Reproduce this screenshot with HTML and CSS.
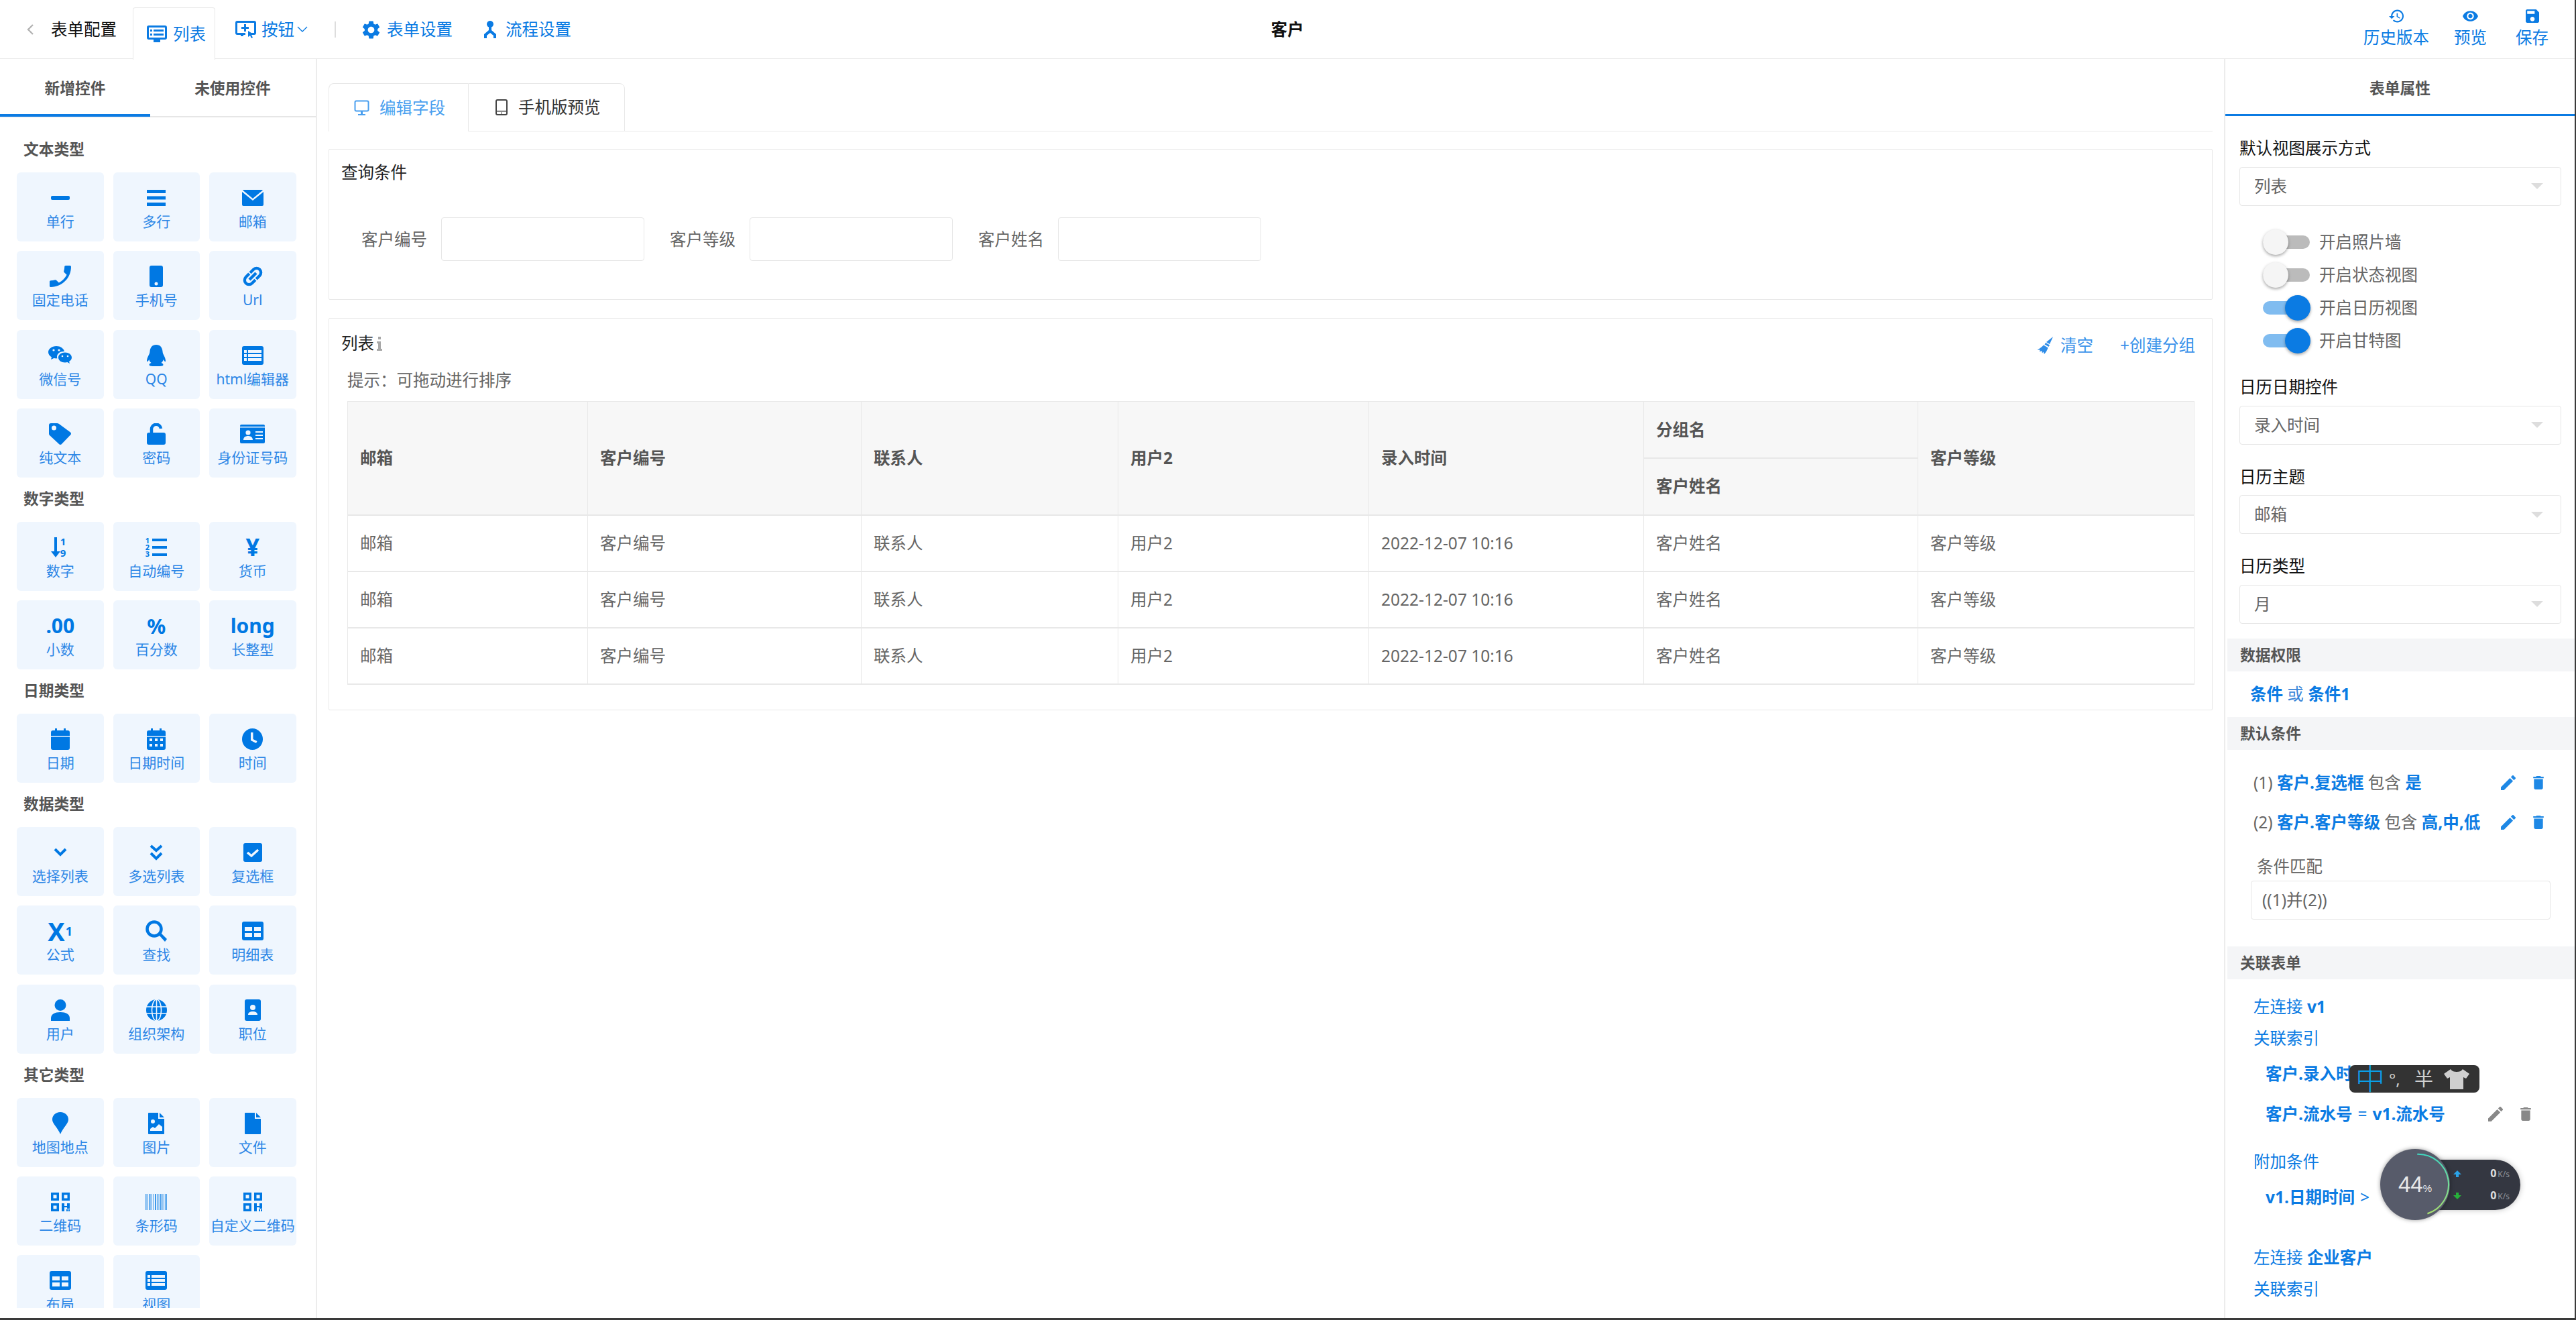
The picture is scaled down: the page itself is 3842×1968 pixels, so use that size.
FILE: index.html
```html
<!DOCTYPE html>
<html lang="zh-CN">
<head>
  <meta charset="utf-8">
  <title>表单配置</title>
  <link rel="stylesheet" href="styles.css">
</head>
<body>
<div class="window">

  <!-- top bar -->
  <header class="topbar">
    <div class="top-left">
      <svg class="back" width="10" height="16" viewBox="0 0 10 16"><path d="M9 1L2 8l7 7" fill="none" stroke="#b5b5b5" stroke-width="2.4"/></svg>
      <span class="top-title">表单配置</span>
      <a class="top-tab">
        <svg width="30" height="25" viewBox="0 0 30 25"><path d="M3 0h24a3 3 0 0 1 3 3v15a3 3 0 0 1-3 3h-7v4H10v-4H3a3 3 0 0 1-3-3V3a3 3 0 0 1 3-3zm0 3v15h24V3z" fill="#0b7be3" fill-rule="evenodd"/><path d="M5 6h3v3H5zM10 6h15v3H10zM5 12h3v3H5zM10 12h15v3H10z" fill="#0b7be3"/></svg>
        <span>列表</span>
      </a>
      <a class="top-link top-btn">
        <svg width="31" height="26" viewBox="0 0 31 26"><path d="M3 0h25a3 3 0 0 1 3 3v15a3 3 0 0 1-3 3H23v-3h5V3H3v15h12v3h-3v2H8v-2H3a3 3 0 0 1-3-3V3a3 3 0 0 1 3-3z" fill="#0b7be3"/><path d="M13 5h3v4h4v3h-4v4h-3v-4H9V9h4zM19 15l8 5-3 1 2 4-2 1-2-4-3 2z" fill="#0b7be3"/></svg>
        <span>按钮</span>
        <svg class="caret" width="16" height="10" viewBox="0 0 16 10"><path d="M1 1l7 7 7-7" fill="none" stroke="#0b7be3" stroke-width="1.4"/></svg>
      </a>
      <i class="top-sep"></i>
      <a class="top-link top-set">
        <svg width="27" height="27" viewBox="2 2 20 20"><path fill="#0b7be3" d="M19.14 12.94c.04-.3.06-.61.06-.94 0-.32-.02-.64-.07-.94l2.03-1.58c.18-.14.23-.41.12-.61l-1.92-3.32c-.12-.22-.37-.29-.59-.22l-2.39.96c-.5-.38-1.03-.7-1.62-.94l-.36-2.54c-.04-.24-.24-.41-.48-.41h-3.84c-.24 0-.43.17-.47.41l-.36 2.54c-.59.24-1.13.57-1.62.94l-2.39-.96c-.22-.08-.47 0-.59.22L2.74 8.87c-.12.21-.08.47.12.61l2.03 1.58c-.05.3-.09.63-.09.94s.02.64.07.94l-2.03 1.58c-.18.14-.23.41-.12.61l1.92 3.32c.12.22.37.29.59.22l2.39-.96c.5.38 1.03.7 1.62.94l.36 2.54c.05.24.24.41.48.41h3.84c.24 0 .44-.17.47-.41l.36-2.54c.59-.24 1.13-.56 1.62-.94l2.39.96c.22.08.47 0 .59-.22l1.92-3.32c.12-.22.07-.47-.12-.61l-2.01-1.58zM12 15.6c-1.98 0-3.6-1.62-3.6-3.6s1.62-3.6 3.6-3.6 3.6 1.62 3.6 3.6-1.62 3.6-3.6 3.6z"/></svg>
        <span>表单设置</span>
      </a>
      <a class="top-link top-flow">
        <svg width="26" height="26" viewBox="0 0 26 26"><circle cx="13" cy="5" r="5" fill="#0b7be3"/><path d="M11 8h4v6l7 6v6h-4v-4l-5-4-5 4v4H4v-6l7-6z" fill="#0b7be3"/></svg>
        <span>流程设置</span>
      </a>
    </div>
    <div class="top-center">客户</div>
    <div class="top-right">
      <a class="top-act top-act-hist">
        <svg width="22" height="20" viewBox="1 3 21 18"><path fill="#0b7be3" d="M13 3c-4.97 0-9 4.03-9 9H1l3.89 3.89.07.14L9 12H6c0-3.87 3.13-7 7-7s7 3.13 7 7-3.13 7-7 7c-1.93 0-3.68-.79-4.94-2.06l-1.42 1.42C8.27 19.99 10.51 21 13 21c4.97 0 9-4.03 9-9s-4.03-9-9-9zm-1 5v5l4.28 2.54.72-1.21-3.5-2.08V8H12z"/></svg>
        <span>历史版本</span>
      </a>
      <a class="top-act top-act-view">
        <svg width="23" height="20" viewBox="1 4 22 16"><path fill="#0b7be3" d="M12 4.5C7 4.5 2.73 7.61 1 12c1.73 4.39 6 7.500 11 7.500s9.270-3.110 11-7.500c-1.730-4.390-6-7.500-11-7.500zM12 17c-2.760 0-5-2.240-5-5s2.240-5 5-5 5 2.240 5 5-2.240 5-5 5zm0-8c-1.660 0-3 1.340-3 3s1.340 3 3 3 3-1.340 3-3-1.340-3-3-3z"/></svg>
        <span>预览</span>
      </a>
      <a class="top-act">
        <svg width="20" height="20" viewBox="3 3 18 18"><path fill="#0b7be3" d="M17 3H5c-1.110 0-2 .9-2 2v14c0 1.100.89 2 2 2h14c1.100 0 2-.9 2-2V7l-4-4zm-5 16c-1.660 0-3-1.340-3-3s1.340-3 3-3 3 1.340 3 3-1.340 3-3 3zm3-10H5V5h10v4z"/></svg>
        <span>保存</span>
      </a>
    </div>
  </header>

  <div class="main">

    <!-- left: controls -->
    <aside class="left">
      <div class="left-tabs">
        <div class="left-tab on">新增控件</div>
        <div class="left-tab">未使用控件</div>
      </div>
      <div class="ctl-scroll">
        <h4 class="ctl-title">文本类型</h4>
        <div class="ctl-grid">
          <div class="ctl"><span class="ctl-ic"><svg width="28" height="6" viewBox="0 0 28 6"><rect width="28" height="6" rx="2"/></svg></span><span>单行</span></div>
          <div class="ctl"><span class="ctl-ic"><svg width="28" height="24" viewBox="0 0 28 24"><path d="M0 0h28v5H0zM0 9.500h28v5H0zM0 19h28v5H0z"/></svg></span><span>多行</span></div>
          <div class="ctl"><span class="ctl-ic"><svg width="32" height="24" viewBox="0 0 32 24"><path d="M2 0h28a2 2 0 0 1 1 .4L16 13 1 .4A2 2 0 0 1 2 0zM0 3l16 13L32 3v19a2 2 0 0 1-2 2H2a2 2 0 0 1-2-2z"/></svg></span><span>邮箱</span></div>
          <div class="ctl"><span class="ctl-ic"><svg width="32" height="32" viewBox="3 3 18 18"><path transform="matrix(-1 0 0 1 24 0)" d="M6.620 10.790c1.440 2.830 3.760 5.140 6.590 6.590l2.200-2.200c.27-.27.67-.36 1.020-.24 1.120.37 2.330.57 3.570.57.55 0 1 .45 1 1V20c0 .55-.45 1-1 1-9.390 0-17-7.610-17-17 0-.55.45-1 1-1h3.500c.55 0 1 .45 1 1 0 1.250.2 2.450.57 3.570.11.35.03.74-.25 1.020l-2.200 2.200z"/></svg></span><span>固定电话</span></div>
          <div class="ctl"><span class="ctl-ic"><svg width="20" height="32" viewBox="0 0 20 32"><path fill-rule="evenodd" d="M3 0h14a3 3 0 0 1 3 3v26a3 3 0 0 1-3 3H3a3 3 0 0 1-3-3V3a3 3 0 0 1 3-3zm7 24.500a2.500 2.500 0 1 0 0 5 2.500 2.500 0 0 0 0-5z"/></svg></span><span>手机号</span></div>
          <div class="ctl"><span class="ctl-ic"><svg width="32" height="32" viewBox="2 2 20 20"><path transform="rotate(-45 12 12)" stroke="#0078e3" stroke-width=".8" d="M3.900 12c0-1.710 1.390-3.100 3.100-3.100h4V7H7c-2.760 0-5 2.240-5 5s2.240 5 5 5h4v-1.900H7c-1.710 0-3.100-1.390-3.100-3.100zM8 13h8v-2H8v2zm9-6h-4v1.900h4c1.710 0 3.100 1.390 3.100 3.100s-1.390 3.100-3.100 3.100h-4V17h4c2.760 0 5-2.240 5-5s-2.240-5-5-5z"/></svg></span><span>Url</span></div>
          <div class="ctl"><span class="ctl-ic"><svg width="35" height="28" viewBox="0 0 35 28"><path d="M12 0c6 0 11 3.500 12 8-6-.5-11 3-11 8 0 1 .2 1.600.4 2.300-1.800.2-3.200 0-5-.4L4 20l1-3.500C2 14.500 0 12 0 9c0-5 5.500-9 12-9z"/><path d="M35 17c0-4.500-4.500-7.500-10-7.500S15 12.500 15 17s4.500 7.500 10 7.500c1.300 0 2.500-.2 3.500-.5l3.500 2-1-3c2.500-1.500 4-3.500 4-6z"/><circle class="hole" cx="8" cy="6" r="1.600"/><circle class="hole" cx="16" cy="6" r="1.600"/><circle class="hole" cx="21" cy="15" r="1.300"/><circle class="hole" cx="29" cy="15" r="1.300"/></svg></span><span>微信号</span></div>
          <div class="ctl"><span class="ctl-ic"><svg width="28" height="32" viewBox="0 0 28 32"><path d="M14 0C8 0 5 4 4.500 10c-.2 2-.5 3-1.500 5-1.500 3-3 6-3 9 0 1 .5 1.500 1 1 .7-.4 2-2 2.500-3 .3 2 1.500 4 3 5-1.500.7-3 1.300-3 3 0 1 2 2 5 2h11c3 0 5-1 5-2 0-1.700-1.500-2.300-3-3 1.500-1 2.700-3 3-5 .5 1 1.800 2.600 2.500 3 .5.500 1 0 1-1 0-3-1.500-6-3-9-1-2-1.300-3-1.500-5C23 4 20 0 14 0z"/></svg></span><span>QQ</span></div>
          <div class="ctl"><span class="ctl-ic"><svg width="32" height="28"><use href="#i-list"/></svg></span><span>html编辑器</span></div>
          <div class="ctl"><span class="ctl-ic"><svg width="33" height="32" viewBox="0 0 33 32"><path fill-rule="evenodd" d="M3 0h9c1 0 2 .3 3 1l17 12.500a2.500 2.500 0 0 1 0 4L19 31a2.500 2.500 0 0 1-4 0L1 18c-.7-.8-1-1.500-1-3V3a3 3 0 0 1 3-3zm4.500 3.500a3.500 3.500 0 1 0 0 7 3.500 3.500 0 0 0 0-7z"/></svg></span><span>纯文本</span></div>
          <div class="ctl"><span class="ctl-ic"><svg width="28" height="32" viewBox="0 0 28 32"><rect y="14" width="28" height="18" rx="3"/><path d="M7 15V9.500a7 7 0 0 1 14-1.500" fill="none" stroke="#0078e3" stroke-width="4.500"/></svg></span><span>密码</span></div>
          <div class="ctl"><span class="ctl-ic"><svg width="37" height="28" viewBox="0 0 37 28"><rect width="37" height="28" rx="2"/><path class="hole" d="M0 3h37v1.500H0z"/><circle class="hole" cx="12" cy="12" r="3.600"/><path class="hole" d="M5 23c0-4 3-6 7-6s7 2 7 6zM23 10h11v2H23zM23 15h11v2H23zM23 20h11v2H23z"/></svg></span><span>身份证号码</span></div>
        </div>

        <h4 class="ctl-title">数字类型</h4>
        <div class="ctl-grid">
          <div class="ctl"><span class="ctl-ic"><svg width="28" height="30" viewBox="0 0 28 30"><path d="M5 0h4v21h5l-7 9-7-9h5z"/><text class="svg-num" x="18" y="12" text-anchor="middle">1</text><text class="svg-num" x="18" y="29" text-anchor="middle">9</text></svg></span><span>数字</span></div>
          <div class="ctl"><span class="ctl-ic"><svg width="32" height="30" viewBox="0 0 32 30"><text class="svg-num-sm" x="3" y="9" text-anchor="middle">1</text><text class="svg-num-sm" x="3" y="19" text-anchor="middle">2</text><text class="svg-num-sm" x="3" y="29" text-anchor="middle">3</text><path d="M10 2h22v4H10zM10 13h22v4H10zM10 24h22v4H10z"/></svg></span><span>自动编号</span></div>
          <div class="ctl"><span class="ctl-ic ctl-txt ctl-yen">¥</span><span>货币</span></div>
          <div class="ctl"><span class="ctl-ic ctl-txt">.00</span><span>小数</span></div>
          <div class="ctl"><span class="ctl-ic ctl-txt ctl-pct">%</span><span>百分数</span></div>
          <div class="ctl"><span class="ctl-ic ctl-txt">long</span><span>长整型</span></div>
        </div>

        <h4 class="ctl-title">日期类型</h4>
        <div class="ctl-grid">
          <div class="ctl"><span class="ctl-ic"><svg width="28" height="32" viewBox="0 0 28 32"><path d="M6 0h3v3h10V0h3v3h3a3 3 0 0 1 3 3v5H0V6a3 3 0 0 1 3-3h3zM0 12.500h28V29a3 3 0 0 1-3 3H3a3 3 0 0 1-3-3z"/></svg></span><span>日期</span></div>
          <div class="ctl"><span class="ctl-ic"><svg width="28" height="32" viewBox="0 0 28 32"><path d="M6 0h3v3h10V0h3v3h3a3 3 0 0 1 3 3v5H0V6a3 3 0 0 1 3-3h3zM0 12.500h28V29a3 3 0 0 1-3 3H3a3 3 0 0 1-3-3z"/><path class="hole" d="M4 15h4v4H4zM12 15h4v4h-4zM20 15h4v4h-4zM4 23h4v4H4zM12 23h4v4h-4zM20 23h4v4h-4z"/></svg></span><span>日期时间</span></div>
          <div class="ctl"><span class="ctl-ic"><svg width="31" height="32" viewBox="0 0 31 32"><ellipse cx="15.500" cy="16" rx="15.500" ry="16"/><path class="hole" d="M13 6h3.500v10l6 3-1.500 3-8-4z"/></svg></span><span>时间</span></div>
        </div>

        <h4 class="ctl-title">数据类型</h4>
        <div class="ctl-grid">
          <div class="ctl"><span class="ctl-ic"><svg width="20" height="14" viewBox="0 0 20 14"><path d="M2 2l8 8 8-8" fill="none" stroke="#0078e3" stroke-width="4"/></svg></span><span>选择列表</span></div>
          <div class="ctl"><span class="ctl-ic"><svg width="20" height="25" viewBox="0 0 20 25"><path d="M2 2l8 7 8-7M2 13l8 8 8-8" fill="none" stroke="#0078e3" stroke-width="4"/></svg></span><span>多选列表</span></div>
          <div class="ctl"><span class="ctl-ic"><svg width="28" height="28" viewBox="0 0 28 28"><rect width="28" height="28" rx="3"/><path class="hole-line" d="M6 14l6 5 10-9" fill="none" stroke-width="3.500"/></svg></span><span>复选框</span></div>
          <div class="ctl"><span class="ctl-ic ctl-txt ctl-x">X<sup>1</sup></span><span>公式</span></div>
          <div class="ctl"><span class="ctl-ic"><svg width="32" height="32" viewBox="0 0 32 32"><circle cx="13" cy="13" r="10.500" fill="none" stroke="#0078e3" stroke-width="4.500"/><path d="M20 22l3-3 9 9-3 4z"/></svg></span><span>查找</span></div>
          <div class="ctl"><span class="ctl-ic"><svg width="32" height="28"><use href="#i-table"/></svg></span><span>明细表</span></div>
          <div class="ctl"><span class="ctl-ic"><svg width="28" height="32" viewBox="0 0 28 32"><ellipse cx="14" cy="8.500" rx="8.500" ry="8.500"/><path d="M0 32v-4c0-6 6-9 14-9s14 3 14 9v4z"/></svg></span><span>用户</span></div>
          <div class="ctl"><span class="ctl-ic"><svg width="31" height="32" viewBox="0 0 31 32"><ellipse cx="15.500" cy="16" rx="15.500" ry="16"/><path class="hole-line" d="M0 11h31M0 21h31M15.500 0v32" fill="none" stroke-width="1.600"/><ellipse class="hole-line" cx="15.500" cy="16" rx="7" ry="16" fill="none" stroke-width="1.600"/></svg></span><span>组织架构</span></div>
          <div class="ctl"><span class="ctl-ic"><svg width="24" height="32" viewBox="0 0 24 32"><rect width="24" height="32" rx="3"/><circle class="hole" cx="12" cy="12" r="4"/><path class="hole" d="M5 23c0-3.500 3-5 7-5s7 1.500 7 5z"/></svg></span><span>职位</span></div>
        </div>

        <h4 class="ctl-title">其它类型</h4>
        <div class="ctl-grid">
          <div class="ctl"><span class="ctl-ic"><svg width="24" height="33" viewBox="0 0 24 33"><path d="M12 0C5 0 0 5 0 11c0 3 1.500 5.500 4 9 3 4 6 8 8 13 2-5 5-9 8-13 2.500-3.500 4-6 4-9 0-6-5-11-12-11z"/></svg></span><span>地图地点</span></div>
          <div class="ctl"><span class="ctl-ic"><svg width="24" height="32" viewBox="0 0 24 32"><path d="M1 0h14v9h9v22a1 1 0 0 1-1 1H1a1 1 0 0 1-1-1V1a1 1 0 0 1 1-1zM17 0l7 7h-7z"/><circle class="hole" cx="7" cy="13" r="3"/><path class="hole" d="M3 27v-3l4-3 3 2 6-6 5 4v6z"/></svg></span><span>图片</span></div>
          <div class="ctl"><span class="ctl-ic"><svg width="24" height="32" viewBox="0 0 24 32"><path d="M1 0h14v9h9v22a1 1 0 0 1-1 1H1a1 1 0 0 1-1-1V1a1 1 0 0 1 1-1zM17 0l7 7h-7z"/></svg></span><span>文件</span></div>
          <div class="ctl"><span class="ctl-ic"><svg width="28" height="28"><use href="#i-qr"/></svg></span><span>二维码</span></div>
          <div class="ctl"><span class="ctl-ic"><svg width="32" height="24" viewBox="0 0 32 24"><path opacity=".75" d="M0 0h1.500v24H0zM3 0h1v24H3zM5.500 0h2v24h-2zM9 0h1v24H9zM11.500 0h1v24h-1zM14 0h2v24h-2zM17 0h1v24h-1zM19.500 0h1v24h-1zM22 0h1.500v24H22zM24.500 0h1v24h-1zM27 0h1v24h-1zM29 0h1v24h-1zM31 0h1v24h-1z"/></svg></span><span>条形码</span></div>
          <div class="ctl"><span class="ctl-ic"><svg width="28" height="28"><use href="#i-qr"/></svg></span><span>自定义二维码</span></div>
          <div class="ctl"><span class="ctl-ic"><svg width="32" height="28"><use href="#i-table"/></svg></span><span>布局</span></div>
          <div class="ctl"><span class="ctl-ic"><svg width="32" height="28"><use href="#i-list"/></svg></span><span>视图</span></div>
        </div>
      </div>
    </aside>

    <!-- center -->
    <section class="center">
      <div class="view-tabs">
        <a class="view-tab on">
          <svg width="23" height="24" viewBox="0 0 23 24"><rect x="1.500" y="1.500" width="20" height="15" rx="2" fill="none" stroke="#4a9fef" stroke-width="2"/><path d="M10 17h3v4h4v2H6v-2h4z" fill="#4a9fef"/></svg>
          <span>编辑字段</span>
        </a>
        <a class="view-tab">
          <svg width="18" height="24" viewBox="0 0 18 24"><rect x="1" y="1" width="16" height="22" rx="2" fill="none" stroke="#444" stroke-width="2"/><path d="M1 17h16v1.500H1z" fill="#444"/><circle cx="9" cy="20.500" r="1" fill="#444"/></svg>
          <span>手机版预览</span>
        </a>
      </div>

      <div class="panel panel-query">
        <div class="panel-title">查询条件</div>
        <div class="filter">
          <label class="filter-item"><span>客户编号</span><i class="filter-input"></i></label>
          <label class="filter-item"><span>客户等级</span><i class="filter-input"></i></label>
          <label class="filter-item"><span>客户姓名</span><i class="filter-input"></i></label>
        </div>
      </div>

      <div class="panel panel-list">
        <div class="list-head">
          <div class="panel-title list-title">列表 <svg width="8" height="22" viewBox="0 0 8 22"><path d="M2 1h4v4H2zM0 8h6v11h2v3H0v-3h2v-8H0z" fill="#a8a8a8"/></svg></div>
          <div class="list-acts">
            <a class="list-clear">
              <svg width="24" height="26" viewBox="0 0 24 26"><path d="M24 0l-5 11-5-3zM13 9l6 3.500-1.500 2.500-6-3.500zM10 12.500l6.500 4c-1 3.500-3 6.500-5.500 9.500l-1.500-3.500-1.500 2L7 21l-3 1.500.5-3-4 .5C3 18 7 16 10 12.500z" fill="#2f8de8"/></svg>
              <span>清空</span>
            </a>
            <a>+创建分组</a>
          </div>
        </div>
        <div class="list-tip">提示：可拖动进行排序</div>
        <table class="grid">
          <colgroup><col class="c1"><col class="c2"><col class="c3"><col class="c4"><col class="c5"><col class="c6"><col class="c7"></colgroup>
          <thead>
            <tr>
              <th rowspan="2">邮箱</th><th rowspan="2">客户编号</th><th rowspan="2">联系人</th><th rowspan="2">用户2</th><th rowspan="2">录入时间</th><th>分组名</th><th rowspan="2">客户等级</th>
            </tr>
            <tr><th>客户姓名</th></tr>
          </thead>
          <tbody>
            <tr><td>邮箱</td><td>客户编号</td><td>联系人</td><td>用户2</td><td>2022-12-07 10:16</td><td>客户姓名</td><td>客户等级</td></tr>
            <tr><td>邮箱</td><td>客户编号</td><td>联系人</td><td>用户2</td><td>2022-12-07 10:16</td><td>客户姓名</td><td>客户等级</td></tr>
            <tr><td>邮箱</td><td>客户编号</td><td>联系人</td><td>用户2</td><td>2022-12-07 10:16</td><td>客户姓名</td><td>客户等级</td></tr>
          </tbody>
        </table>
      </div>
    </section>

    <!-- right: form props -->
    <aside class="right">
      <div class="right-tab">表单属性</div>
      <div class="prop-body">
        <div class="prop-label first">默认视图展示方式</div>
        <div class="select"><span>列表</span><i class="arrow"></i></div>

        <div class="switches">
          <div class="switch-row"><i class="switch"></i><span>开启照片墙</span></div>
          <div class="switch-row"><i class="switch"></i><span>开启状态视图</span></div>
          <div class="switch-row"><i class="switch on"></i><span>开启日历视图</span></div>
          <div class="switch-row"><i class="switch on"></i><span>开启甘特图</span></div>
        </div>

        <div class="prop-label">日历日期控件</div>
        <div class="select"><span>录入时间</span><i class="arrow"></i></div>
        <div class="prop-label">日历主题</div>
        <div class="select"><span>邮箱</span><i class="arrow"></i></div>
        <div class="prop-label">日历类型</div>
        <div class="select"><span>月</span><i class="arrow"></i></div>
      </div>

      <div class="band band-perm">数据权限</div>
      <div class="perm"><b>条件</b> 或 <b>条件1</b></div>

      <div class="band">默认条件</div>
      <div class="conds">
        <div class="cond"><span class="cond-text"><em>(1)</em> <b>客户.复选框</b> <em>包含</em> <b>是</b></span>
          <svg class="ed" width="22" height="22"><use href="#i-edit"/></svg><svg class="del" width="16" height="20"><use href="#i-del"/></svg></div>
        <div class="cond"><span class="cond-text"><em>(2)</em> <b>客户.客户等级</b> <em>包含</em> <b>高,中,低</b></span>
          <svg class="ed" width="22" height="22"><use href="#i-edit"/></svg><svg class="del" width="16" height="20"><use href="#i-del"/></svg></div>
      </div>
      <div class="match-label">条件匹配</div>
      <div class="match-input">((1)并(2))</div>

      <div class="band band-rel">关联表单</div>
      <div class="rel">
        <div class="rel-line">左连接 <b>v1</b></div>
        <div class="rel-line">关联索引</div>
        <div class="rel-cond"><b>客户.录入时间</b></div>
        <div class="rel-cond"><b>客户.流水号</b> = <b>v1.流水号</b>
          <svg class="ed gray" width="22" height="22"><use href="#i-edit"/></svg><svg class="del gray" width="16" height="20"><use href="#i-del"/></svg></div>
        <div class="rel-line rel-extra">附加条件</div>
        <div class="rel-cond"><b>v1.日期时间</b> &gt;</div>
        <div class="rel-line rel-next">左连接 <b>企业客户</b></div>
        <div class="rel-line">关联索引</div>
      </div>
    </aside>
  </div>

  <!-- desktop things lying over the window -->
  <div class="ime">
    <span class="ime-zh">中</span>
    <span class="ime-dot">°,</span>
    <span class="ime-half">半</span>
    <svg width="38" height="30" viewBox="0 0 38 30"><path d="M10 0c2 3 5 4 9 4s7-1 9-4l10 7-5 7-4-2v18H9V12l-4 2-5-7z" fill="#cfcfcf"/></svg>
  </div>

  <div class="netmon">
    <div class="net-pill">
      <div class="net-row"><svg width="12" height="10" viewBox="0 0 12 10"><path d="M6 0l6 6H8v4H4V6H0z" fill="#2aa3e8"/></svg><span><b>0</b>K/s</span></div>
      <div class="net-row"><svg width="12" height="10" viewBox="0 0 12 10"><path d="M6 10L0 4h4V0h4v4h4z" fill="#27b13a"/></svg><span><b>0</b>K/s</span></div>
    </div>
    <div class="net-dial">
      <svg class="net-ring" width="104" height="104" viewBox="0 0 104 104"><defs><linearGradient id="ring" x1="0" y1="0" x2="0" y2="1"><stop offset="0" stop-color="#3fd8c0"/><stop offset="1" stop-color="#a8e070"/></linearGradient></defs><path d="M54 10a42 42 0 0 1 14 82" transform="translate(-3 -3) scale(1.08)" fill="none" stroke="url(#ring)" stroke-width="2"/></svg>
      <span class="net-pct">44<small>%</small></span>
    </div>
  </div>
</div>

<svg class="defs" width="0" height="0">
  <symbol id="i-list" viewBox="0 0 32 28"><rect width="32" height="28" rx="3" fill="#0078e3"/><path fill="#eff6fe" d="M3 6h4v4H3zM9 6h20v4H9zM3 12h4v4H3zM9 12h20v4H9zM3 18h4v4H3zM9 18h20v4H9z"/></symbol>
  <symbol id="i-table" viewBox="0 0 32 28"><rect width="32" height="28" rx="3" fill="#0078e3"/><path fill="#eff6fe" d="M4 8h11v6H4zM18 8h10v6H18zM4 17h11v6H4zM18 17h10v6H18z"/></symbol>
  <symbol id="i-qr" viewBox="0 0 28 28"><path fill="#0078e3" fill-rule="evenodd" d="M0 0h12v12H0zm3.500 3.500v5h5v-5zM16 0h12v12H16zm3.500 3.500v5h5v-5zM0 16h12v12H0zm3.500 3.500v5h5v-5zM16 16h4v4h4v-4h4v8h-4v-2h-4v6h-4zM23 25h2v3h-2zM26 25h2v3h-2z"/></symbol>
  <symbol id="i-edit" viewBox="3 3 18 18"><path fill="currentColor" d="M3 17.250V21h3.750L17.810 9.940l-3.750-3.750L3 17.250zM20.710 7.040c.39-.39.39-1.020 0-1.410l-2.340-2.340c-.39-.39-1.020-.39-1.410 0l-1.830 1.830 3.750 3.750 1.830-1.830z"/></symbol>
  <symbol id="i-del" viewBox="5 3 14 18"><path fill="currentColor" d="M6 19c0 1.100.9 2 2 2h8c1.100 0 2-.9 2-2V7H6v12zM19 4h-3.500l-1-1h-5l-1 1H5v2h14V4z"/></symbol>
</svg>
</body>
</html>
```

FILE: styles.css
```css
* { box-sizing: border-box; }

html, body {
  margin: 0;
  height: 100%;
  overflow: hidden;
}

body {
  background: #3a3a3a;
  color: #666;
  font-family: "Noto Sans", "Noto Sans CJK SC", sans-serif;
  font-size: 24.5px;
  line-height: 34px;
}

a { color: inherit; }
b { font-weight: 700; }
em { font-style: normal; }
i { font-style: normal; }

.defs { position: absolute; }

.window {
  position: relative;
  width: 3840px;
  height: 1965px;
  background: #fff;
  overflow: hidden;
}

/* top bar */
.topbar {
  display: grid;
  grid-template-columns: 1fr auto 1fr;
  height: 88px;
  border-bottom: 1px solid #e8e8e8;
}

.top-left {
  display: flex;
  align-items: center;
  padding-left: 40px;
  height: 88px;
}

.top-title {
  margin-left: 26px;
  color: #111;
  white-space: nowrap;
}

.top-tab {
  display: flex;
  align-items: center;
  gap: 9px;
  align-self: flex-end;
  width: 123px;
  height: 78px;
  margin-left: 24px;
  margin-bottom: -1px;
  padding: 0 0 0 20px;
  color: #0b7be3;
  background: #fff;
  border: 1px solid #e8e8e8;
  border-bottom: 0;
  border-radius: 4px 4px 0 0;
}

.top-link {
  display: flex;
  align-items: center;
  gap: 10px;
  color: #0b7be3;
  white-space: nowrap;
}

.top-btn { margin-left: 30px; gap: 8px; }
.top-btn .caret { margin-left: -4px; }
.top-set { margin-left: 39px; }
.top-flow { margin-left: 43px; }

.top-sep {
  width: 2px;
  height: 24px;
  margin-left: 40px;
  background: #ddd;
}

.top-center {
  color: #111;
  font-weight: 700;
  line-height: 88px;
}

.top-right {
  display: flex;
  justify-content: flex-end;
  padding-right: 39px;
}

.top-act {
  display: flex;
  flex-direction: column;
  align-items: center;
  padding-top: 14px;
  color: #0b7be3;
  line-height: 30px;
}

.top-act svg { height: 20px; margin-bottom: 7px; }
.top-act-hist { margin-right: 37px; }
.top-act-view { margin-right: 43px; }

/* three columns */
.main {
  display: flex;
  height: 1877px;
}

/* left */
.left {
  flex: none;
  width: 473px;
  border-right: 2px solid #ececec;
}

.left-tabs {
  display: flex;
  height: 87px;
  border-bottom: 2px solid #e6e6e6;
}

.left-tab {
  position: relative;
  flex: none;
  width: 224px;
  color: #555;
  font-size: 22.75px;
  font-weight: 700;
  line-height: 88px;
  text-align: center;
}

.left-tab.on::after {
  content: "";
  position: absolute;
  left: 0;
  right: 0;
  bottom: -1px;
  height: 4px;
  background: #0b7be3;
}

.left-tab + .left-tab { width: 246px; }

.ctl-scroll {
  height: 1775px;
  padding: 16px 0 0 25px;
  overflow: hidden;
}

.ctl-title {
  height: 66px;
  margin: 0 0 0 10px;
  color: #555;
  font-size: 22.75px;
  font-weight: 700;
  line-height: 64px;
}

.ctl-grid {
  display: grid;
  grid-template-columns: 129.5px 129.5px 129.5px;
  grid-auto-rows: 103px;
  gap: 14.3px 14px;
}

.ctl {
  display: flex;
  flex-direction: column;
  align-items: center;
  padding-top: 22px;
  color: #2c86e6;
  background: #eff6fe;
  border-radius: 6px;
  font-size: 21px;
  line-height: 30px;
  white-space: nowrap;
}

.ctl-ic {
  display: flex;
  align-items: center;
  justify-content: center;
  height: 32px;
  margin-bottom: 4px;
  color: #0078e3;
}

.ctl svg { fill: #0078e3; display: block; }
.ctl .hole { fill: #eff6fe; }
.ctl .hole-line { stroke: #eff6fe; }

.ctl-txt {
  font-size: 30px;
  font-weight: 700;
  line-height: 32px;
}

.ctl-yen { font-size: 36px; }
.ctl-pct { font-size: 31px; }
.ctl-x { font-size: 38px; }

.ctl-x sup {
  margin-left: 1px;
  font-size: 18px;
  line-height: 0;
  vertical-align: 16px;
}

.svg-num {
  font-family: "Noto Sans", sans-serif;
  font-size: 15px;
  font-weight: 700;
}

.svg-num-sm {
  font-family: "Noto Sans", sans-serif;
  font-size: 11px;
  font-weight: 700;
}

/* center */
.center {
  flex: none;
  width: 2844px;
  padding: 36px 17px 0;
}

.view-tabs {
  display: flex;
  height: 72px;
  border-bottom: 1px solid #e8e8e8;
}

.view-tab {
  display: flex;
  align-items: center;
  height: 72px;
  color: #333;
  background: #fff;
  border: 1px solid #e8e8e8;
  border-left: 0;
  border-radius: 0 8px 0 0;
}

.view-tab:first-child { border-left: 1px solid #e8e8e8; }

.view-tab.on {
  width: 208px;
  padding-left: 37px;
  gap: 15px;
  color: #4a9fef;
  border-right: 0;
  border-bottom: 0;
  border-radius: 8px 0 0 0;
}

.view-tab:not(.on) {
  width: 234px;
  padding-left: 40px;
  gap: 16px;
  border-left: 1px solid #e8e8e8;
}

.panel {
  border: 1px solid #e8e8e8;
  border-radius: 2px;
}

.panel-title {
  color: #222;
  line-height: 34px;
}

.panel-query {
  height: 225px;
  margin-top: 26px;
  padding: 17px 18px 0;
}

.filter {
  display: flex;
  margin-top: 50px;
  padding-left: 30px;
}

.filter-item {
  display: flex;
  align-items: center;
  margin-right: 38px;
  white-space: nowrap;
}

.filter-input {
  width: 303px;
  height: 65px;
  margin-left: 21px;
  border: 1px solid #e6e6e6;
  border-radius: 4px;
}

.panel-list {
  height: 585px;
  margin-top: 27px;
  padding: 17px 28px 0 27px;
}

.list-head {
  display: flex;
  justify-content: space-between;
}

.list-title {
  display: flex;
  align-items: center;
  gap: 4px;
  margin-left: -9px;
}

.list-acts {
  display: flex;
  gap: 40px;
  margin-top: 6px;
  margin-right: -3px;
  color: #3a92ea;
}

.list-clear {
  display: flex;
  align-items: center;
  gap: 11px;
}

.list-tip { margin-top: 18px; }

.grid {
  width: 2754px;
  margin-top: 14px;
  border-collapse: collapse;
  table-layout: fixed;
}

.c1 { width: 358px; }
.c2 { width: 408px; }
.c3 { width: 383px; }
.c4 { width: 374px; }
.c5 { width: 410px; }
.c6 { width: 409px; }
.c7 { width: 412px; }

.grid th,
.grid td {
  padding: 0 18px;
  border: 1px solid #e8e8e8;
  border-bottom-width: 2px;
  text-align: left;
  white-space: nowrap;
}

.grid th {
  height: 84.5px;
  color: #555;
  background: #f7f7f7;
  font-weight: 700;
}

.grid td { height: 84px; }

/* right */
.right {
  flex: none;
  width: 523px;
  height: 1877px;
  border-left: 2px solid #ececec;
  overflow: hidden;
}

.right-tab {
  height: 85px;
  margin-left: 0;
  color: #555;
  border-bottom: 3px solid #0b7be3;
  font-size: 22.75px;
  font-weight: 700;
  line-height: 88px;
  text-align: center;
}

.prop-body { padding: 0 20px 0 21px; }

.prop-label {
  margin-top: 31px;
  color: #111;
}

.select {
  display: flex;
  align-items: center;
  justify-content: space-between;
  height: 58px;
  margin-top: 10.500px;
  padding: 0 26px 0 21px;
  border: 1px solid #e6e6e6;
  border-radius: 4px;
}

.arrow {
  width: 0;
  height: 0;
  border-left: 9px solid transparent;
  border-right: 9px solid transparent;
  border-top: 9px solid #ddd;
}

.switches { margin-top: 30px; }

.switch-row {
  display: flex;
  align-items: center;
  height: 49px;
  padding-left: 35px;
}

.switch {
  position: relative;
  width: 70px;
  height: 20px;
  margin-right: 14px;
  background: #bbb;
  border-radius: 10px;
}

.switch::after {
  content: "";
  position: absolute;
  left: 0;
  top: -9px;
  width: 38px;
  height: 38px;
  background: #f5f5f5;
  border-radius: 50%;
  box-shadow: 0 2px 4px rgba(0, 0, 0, .35);
}

.switch.on { background: #80bcf0; }

.switch.on::after {
  left: 33px;
  background: #0b7be3;
}

.switches + .prop-label { margin-top: 27.500px; }

.band {
  height: 49px;
  margin-left: 3px;
  padding-left: 19px;
  color: #555;
  background: #f4f5f7;
  font-size: 22.75px;
  font-weight: 700;
  line-height: 49px;
}

.band-perm { margin-top: 22px; }
.band-rel { margin-top: 40px; }

.perm {
  height: 68px;
  padding-left: 37px;
  color: #3a86d8;
  line-height: 68px;
}

.perm b { color: #0b7be3; }

.conds { padding: 19.500px 0 0 42px; }

.cond {
  display: flex;
  align-items: center;
  height: 59px;
  white-space: nowrap;
}

.cond-text { width: 369px; }
.cond b { color: #0b7be3; }

.ed { color: #1e88e5; }
.del { color: #1e88e5; margin-left: 26px; }
.ed.gray, .del.gray { color: #888; }

.match-label { margin: 19.500px 0 0 47px; }

.match-input {
  width: 447px;
  height: 58px;
  margin: 4px 0 0 38px;
  padding-left: 16px;
  border: 1px solid #e6e6e6;
  border-radius: 4px;
  line-height: 56px;
}

.rel {
  padding: 17.500px 0 0 42px;
  color: #0b7be3;
}

.rel-line { height: 47px; line-height: 47px; }

.rel-cond {
  display: flex;
  align-items: center;
  gap: 8px;
  height: 60px;
  padding-left: 18px;
  white-space: nowrap;
}

.rel-cond .ed { margin-left: auto; margin-right: 0; position: relative; left: -65px; }
.rel-cond .del { position: relative; left: -65px; margin-left: 18px; }

.rel-extra { margin-top: 16.500px; }
.rel-next { margin-top: 36.500px; }

/* IME status bar */
.ime {
  position: absolute;
  left: 3504px;
  top: 1588px;
  display: flex;
  align-items: center;
  width: 194px;
  height: 41px;
  padding-left: 9px;
  color: #cfcfcf;
  background: #333;
  border-radius: 8px;
  line-height: 41px;
  overflow: hidden;
}

.ime-zh {
  width: 50px;
  color: #0a9fe8;
  font-size: 44px;
  font-weight: 300;
}

.ime-dot { width: 38px; font-size: 24px; }
.ime-half { width: 44px; font-size: 28px; }

/* cpu and network meter */
.netmon {
  position: absolute;
  left: 3550px;
  top: 1713px;
  width: 212px;
  height: 106px;
}

.net-pill {
  position: absolute;
  left: 50px;
  top: 16px;
  width: 159px;
  height: 75px;
  padding: 4px 16px 0 59px;
  background: #343741;
  border-radius: 0 38px 38px 0;
  box-shadow: 0 0 8px rgba(0, 0, 0, .25);
}

.net-row {
  display: flex;
  align-items: center;
  justify-content: space-between;
  height: 33px;
  color: #8f939c;
  font-size: 12px;
  line-height: 33px;
}

.net-row b {
  color: #ddd;
  font-size: 16px;
  margin-right: 2px;
}

.net-dial {
  position: absolute;
  left: 0;
  top: 0;
  width: 104px;
  height: 106px;
  background: #575b6a;
  border-radius: 50%;
  box-shadow: 0 0 6px rgba(0, 0, 0, .4);
  color: #e8e8e8;
  text-align: center;
  font-size: 33px;
  line-height: 104px;
}

.net-ring { position: absolute; left: 0; top: 0; }

.net-pct {
  position: relative;
  font-family: "Liberation Sans", sans-serif;
}

.net-pct small { font-size: 15px; }
```
